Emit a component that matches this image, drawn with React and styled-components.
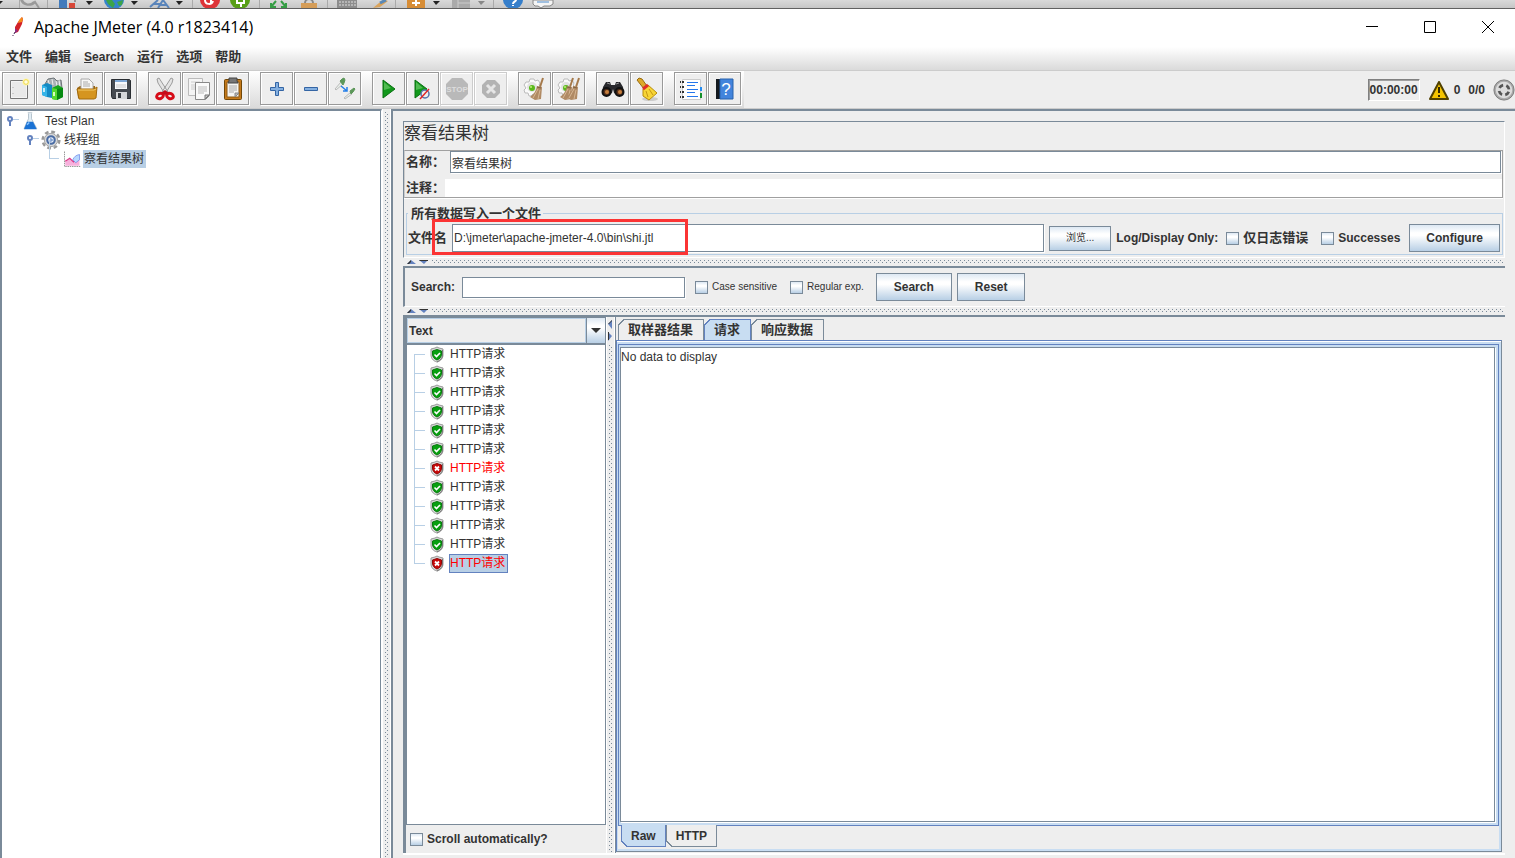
import { useState } from 'react'
import styled, { createGlobalStyle } from 'styled-components'

const slate = '#7a8a99'
const blue = '#6382bf'
const paleBlue = '#b8cfe5'
const tabBlue = '#c8ddf2'
const grey = '#eeeeee'
const metal = 'linear-gradient(#dde8f3 0%, #ffffff 30%, #ffffff 40%, #b8cfe5 100%)'

const dots = `url("data:image/svg+xml,%3Csvg xmlns='http://www.w3.org/2000/svg' width='4' height='4' shape-rendering='crispEdges'%3E%3Crect width='1' height='1' fill='%237a8a99'/%3E%3Crect x='2' y='2' width='1' height='1' fill='%237a8a99'/%3E%3C/svg%3E")`

const GlobalStyle = createGlobalStyle`
  * {
    box-sizing: border-box;
  }
  body {
    margin: 0;
    background: ${grey};
    color: #333;
    font-family: 'Liberation Sans', 'Noto Sans CJK SC', sans-serif;
    font-size: 12px;
    line-height: 18px;
  }
  button, input, select, textarea {
    font: inherit;
    color: inherit;
    margin: 0;
    border-radius: 0;
    outline: none;
  }
  svg {
    display: block;
    flex: none;
  }
`

const Window = styled.div`
  min-height: 100vh;
  display: flex;
  flex-direction: column;
`

const Behind = styled.div`
  height: 9px;
  overflow: hidden;
  background: linear-gradient(#d9d9d9, #c6c6c6);
  border-bottom: 1px solid #606060;
`

const TitleBar = styled.header`
  height: 38px;
  background: white;
  display: flex;
  align-items: center;
  padding: 0 0 2px 8px;
`

const Title = styled.h1`
  flex: 1;
  margin: 0 0 0 6px;
  color: black;
  font: 400 16px/22px 'Open Sans', sans-serif;
`

const WindowButtons = styled.div`
  display: flex;
  gap: 4px;
`

const WindowButton = styled.button`
  width: 54px;
  height: 36px;
  padding: 0;
  border: 0;
  background: none;
  display: flex;
  align-items: center;
  justify-content: center;
`

const MenuBar = styled.nav`
  height: 24px;
  display: flex;
  gap: 13px;
  padding: 0 6px 4px;
  align-items: center;
  background: linear-gradient(#ffffff, #dadada);
  border-bottom: 1px solid #ccc;
`

const MenuItem = styled.button`
  padding: 0;
  border: 0;
  background: none;
  font-weight: bold;
  font-size: ${p => p.$latin ? 12 : 13}px;
  line-height: 20px;

  &::first-letter {
    text-decoration: ${p => p.$latin ? 'underline' : 'none'};
  }
`

const ToolBar = styled.div`
  height: 38px;
  display: flex;
  justify-content: space-between;
  border-bottom: 1px solid #ccc;
`

const Tools = styled.div`
  display: flex;
  gap: 10px;
  padding: 1px 2px 3px;
  background: linear-gradient(#ffffff, #dadada);
`

const ToolGroup = styled.div`
  display: flex;
  gap: 1px;
  padding-right: 1px;
`

const ToolButton = styled.button`
  width: 33px;
  height: 33px;
  padding: 0;
  border: 1px solid ${p => p.disabled ? '#ccc' : '#999'};
  box-shadow: inset 1px 1px white, 1px 1px white;
  background: ${grey};
  display: flex;
  align-items: center;
  justify-content: center;

  &:active {
    background: #ccc;
  }
`

const Status = styled.div`
  display: flex;
  align-items: center;
  font-weight: bold;
  gap: 8px;
  padding-top: 1px;
`

const Timer = styled.output`
  padding: 1px;
  border: 1px solid #808080;
  border-right-color: white;
  border-bottom-color: white;
  box-shadow: inset 1px 1px #a0a0a0;
`

const Warnings = styled.span`
  display: flex;
  align-items: center;
  gap: 4px;
`

const Body = styled.main`
  flex: 1;
  display: flex;
`

const PlanPane = styled.aside`
  width: 382px;
  border: 2px solid ${slate};
  border-right: 1px solid white;
  border-bottom: 0;
  background: white;
  display: flex;

  &::after {
    content: '';
    width: 1px;
    margin-left: auto;
    background: ${slate};
  }
`

const PlanTree = styled.ul`
  list-style: none;
  margin: 0;
  padding: 0 0 0 3px;

  ul {
    list-style: none;
    margin: 0;
    padding: 0 0 0 20px;
  }
`

const PlanRow = styled.div`
  display: flex;
  align-items: center;
  height: 19px;
`

const Elbow = styled.span`
  width: 10px;
  height: 19px;
  margin: -19px 4px 0 4px;
  border-left: 1px solid ${paleBlue};
  border-bottom: 1px solid ${paleBlue};
`

const NodeLabel = styled.span`
  margin-left: ${p => p.$gap}px;
  padding: 0 2px 0 1px;
  background: ${p => p.$selected ? paleBlue : 'none'};
`

const VerticalDivider = styled.div`
  width: 9px;
  padding-top: 3px;
  display: flex;
  flex-direction: column;
  align-items: center;
  gap: 4px;
  border-left: 1px solid white;
  border-right: 1px solid white;

  &::after {
    content: '';
    flex: 1;
    width: 4px;
    background: ${dots};
  }
`

const HorizontalDivider = styled.div`
  height: 8px;
  display: flex;
  align-items: center;
  gap: 4px;
  padding: 0 2px 0 4px;

  &::after {
    content: '';
    flex: 1;
    height: 4px;
    background: ${dots};
  }
`

const WorkPane = styled.div`
  flex: 1;
  min-width: 0;
  border: 2px solid ${slate};
  border-right: 0;
  border-bottom: 0;
  padding: 10px 10px 3px;
  display: flex;
  flex-direction: column;
`

const Panel = styled.section`
  border: 1px solid ${slate};
  border-right-color: white;
  border-bottom-color: white;
  padding-right: 1px;
`

const Heading = styled.h2`
  margin: 0;
  font-size: 17px;
  font-weight: 400;
  line-height: 24px;
  padding-bottom: 4px;
`

const NameBox = styled.div`
  border: 1px solid #a0a0a0;
  border-left-color: #ccc;
  box-shadow: 0 1px white;
  padding-left: 1px;
`

const FieldRow = styled.div`
  display: flex;
  align-items: center;
  gap: ${p => p.$gap}px;
  padding: 0 ${p => p.$right || 0}px ${p => p.$bottom || 0}px 0;
`

const Label = styled.label`
  font-weight: bold;
  font-size: ${p => p.$latin ? 12 : 13}px;
  white-space: nowrap;
`

const TextField = styled.input`
  flex: 1;
  min-width: 0;
  height: ${p => p.$height}px;
  padding: 0 1px;
  border: ${p => p.$flat ? '0' : `1px solid ${slate}`};
  background: white;
  box-shadow: ${p => p.$flat ? 'none' : '1px 1px white'};
`

const FileBox = styled.fieldset`
  position: relative;
  min-width: 0;
  margin: 6px 0 2px 2px;
  padding: 1px 2px 2px 1px;
  border: 1px solid ${paleBlue};
`

const Legend = styled.legend`
  padding: 0 2px 0 3px;
  font-weight: bold;
  font-size: 13px;
  line-height: 19px;
`

const Highlight = styled.span`
  position: absolute;
  left: 25px;
  top: -4px;
  width: 256px;
  height: 36px;
  border: 3px solid #fb3434;
  pointer-events: none;
`

const MetalButton = styled.button`
  height: ${p => p.$small ? 25 : 28}px;
  padding: 0 ${p => p.$pad || 16}px;
  border: 1px solid ${slate};
  background: ${metal};
  font-weight: ${p => p.$small ? 400 : 700};
  font-size: ${p => p.$small ? 10 : 12}px;
  white-space: nowrap;
`

const CheckGroup = styled.div`
  display: flex;
  gap: 13px;
  margin: ${p => p.$margin};
`

const CheckLabel = styled.label`
  display: flex;
  align-items: center;
  gap: 4px;
  font-weight: ${p => p.$small ? 400 : 700};
  font-size: ${p => p.$small ? 10 : p.$latin ? 12 : 13}px;
  white-space: nowrap;
`

const CheckBox = styled.input.attrs({ type: 'checkbox' })`
  appearance: none;
  width: 13px;
  height: 13px;
  border: 1px solid ${slate};
  background: ${metal};

  &:checked {
    box-shadow: inset 0 0 0 3px white;
    background: #333;
  }
`

const SearchPanel = styled.form`
  display: flex;
  align-items: center;
  height: 41px;
  border-top: 2px solid ${slate};
  border-left: 2px solid ${slate};
  border-bottom: 1px solid white;
  padding-left: 6px;
`

const SearchField = styled(TextField)`
  flex: none;
  width: 223px;
  margin: 0 10px 0 7px;
`

const SearchButtons = styled.div`
  display: flex;
  gap: 5px;
`

const Results = styled.section`
  flex: 1;
  display: flex;
  border-top: 2px solid ${slate};
  border-bottom: 2px solid white;
  padding-right: 3px;
`

const ResultList = styled.div`
  width: 203px;
  display: flex;
  flex-direction: column;
  border-left: 3px solid ${slate};
`

const Combo = styled.div`
  display: flex;
  height: 28px;
  border: 1px solid ${slate};
  border-bottom-width: 2px;
`

const ComboSelect = styled.select`
  flex: 1;
  appearance: none;
  border: 1px solid ${paleBlue};
  background: ${grey};
  padding: 0 1px;
  font-weight: bold;
`

const ComboArrow = styled.span`
  width: 19px;
  display: flex;
  align-items: center;
  justify-content: center;
  border-left: 1px solid ${slate};
  background: ${metal};
`

const Samples = styled.ul`
  flex: 1;
  list-style: none;
  margin: 0;
  padding: 0 0 0 7px;
  background: white;
  border: 1px solid ${slate};
  border-top: 0;
`

const Sample = styled.li`
  display: flex;
  align-items: center;
  height: 19px;
  color: ${p => p.$failed ? 'red' : '#333'};

  &::before {
    content: '';
    width: 10px;
    height: 19px;
    margin: ${p => p.$first ? '19px 4px 0 0' : '-19px 4px 0 0'};
    border-left: 1px solid ${paleBlue};
    border-bottom: ${p => p.$first ? 0 : 1}px solid ${paleBlue};
    border-top: ${p => p.$first ? 1 : 0}px solid ${paleBlue};
  }
`

const SampleLabel = styled.span`
  margin-left: 4px;
  padding: 0 2px 0 0;
  line-height: 17px;
  border: 1px solid ${p => p.$selected ? blue : 'transparent'};
  background: ${p => p.$selected ? paleBlue : 'none'};
`

const ScrollRow = styled.div`
  height: 28px;
  display: flex;
  align-items: center;
  padding-left: 4px;
`

const TabPane = styled.div`
  flex: 1;
  min-width: 0;
  display: flex;
  flex-direction: column;
  padding: 2px 0 1px;
  border-left: 1px solid ${slate};
`

const Tabs = styled.div`
  display: flex;
  padding-left: ${p => p.$left}px;
  margin: ${p => p.$bottom ? '-1px 0 2px' : '0'};
`

// the cut corner sits top left, or bottom left for tabs hanging under the pane
const Tab = styled.button`
  height: ${p => p.$bottom ? 22 : 21}px;
  padding: 0 ${p => p.$bottom ? 10 : 11}px 0 10px;
  border: 0;
  font-weight: bold;
  font-size: ${p => p.$latin ? 12 : 13}px;
  --line: ${p => p.$active ? blue : slate};
  --side: ${p => p.$bottom ? '100%' : '0'};
  background:
    linear-gradient(${p => p.$bottom ? '45deg' : '135deg'}, ${grey} 4px, var(--line) 4px, var(--line) 5px, transparent 5px) 0 var(--side) / 7px 7px no-repeat,
    linear-gradient(var(--line), var(--line)) 0 var(--side) / 100% 1px no-repeat,
    linear-gradient(var(--line), var(--line)) 0 0 / 1px 100% no-repeat,
    linear-gradient(var(--line), var(--line)) 100% 0 / 1px 100% no-repeat,
    ${p => p.$active ? tabBlue : grey};
`

const TabContent = styled.div`
  flex: 1;
  display: flex;
  flex-direction: column;
  border: 1px solid ${blue};
  border-right-color: ${slate};
  border-bottom-color: ${slate};
  box-shadow: inset 0 1px white;
  background: ${tabBlue};
  padding: 3px 2px 2px 1px;
`

const InnerPane = styled.div`
  flex: 1;
  display: flex;
  flex-direction: column;
  background: ${grey};
`

const InnerContent = styled.div`
  flex: 1;
  display: flex;
  border: 1px solid ${blue};
  background: ${tabBlue};
  padding: 2px 3px 3px 1px;
`

const Output = styled.textarea`
  flex: 1;
  resize: none;
  border: 1px solid ${slate};
  box-shadow: 1px 1px white;
  padding: 0;
  background: white;
  line-height: 18px;
`

const Icon = ({ size = 24, children, ...rest }) => (
  <svg width={size} height={size} viewBox="0 0 24 24" fill="none" aria-hidden="true" {...rest}>{children}</svg>
)

const NewIcon = () => <Icon>
  <path d="M3.5 3.5h17v18h-17z" fill="#f4f4f4" stroke="#777" />
  <path d="M5 5h14v15H5z" fill="#e9e9e9" />
  <path d="M6 10v1m0 5v1" stroke="#aaa" />
  <circle cx="19" cy="5" r="3.6" fill="#fff6a8" />
  <circle cx="19" cy="5" r="2.3" fill="#fffde0" stroke="#efd84d" />
</Icon>

const TemplatesIcon = () => <Icon>
  <path d="M4 7l3-5 6-1 3 3 4-1 1 8-8 5z" fill="#a9b0b4" stroke="#6d7477" />
  <path d="M7 3l2 6m2-7l1 6m3-4l1 5m2-6l1 7" stroke="#eee" />
  <path d="M1 8l5-2 5 2v13l-5-1-5-2z" fill="#138ac4" />
  <path d="M1 8l5 2v10l-5-2z" fill="#35b4e8" />
  <path d="M3 11v4" stroke="#c8edfa" strokeWidth="2" />
  <path d="M11 11l6-3 5 3v9l-6 3-5-1z" fill="#16a51a" />
  <path d="M11 11l5 1v11l-5-1z" fill="#55d92e" />
  <path d="M16 12l6-1v9l-6 3z" fill="#078a12" />
  <path d="M13 15v4" stroke="#d8ffc0" strokeWidth="2" />
</Icon>

const OpenIcon = () => <Icon>
  <path d="M2 11l3-2h15l1 12H3z" fill="#9b6714" />
  <path d="M6 11V2h8l4 4v7H6z" fill="#f7f7f7" stroke="#aaa" />
  <path d="M8 5h5M8 7h7M8 9h7" stroke="#aaa" />
  <path d="M2 12h17l3-2-1 11-2 1H4z" fill="#d59520" stroke="#a36b0d" />
  <path d="M3 13h16l2-1" stroke="#f3cb68" />
</Icon>

const SaveIcon = () => <Icon>
  <path d="M2.5 2.5h18l1 1v18h-18l-1-2z" fill="#454a50" stroke="#292d32" />
  <path d="M6 3h12v9H6z" fill="#f7f9fb" />
  <path d="M6 3h12v2H6z" fill="#7fa8d5" />
  <path d="M7 8h10M7 10h10" stroke="#c8c8c8" />
  <path d="M7 15h11v7H7z" fill="#d5d7d9" />
  <path d="M9 16h3v5H9z" fill="#353a40" />
</Icon>

const CutIcon = () => <Icon>
  <path d="M4 2l2-1 9 14-3 2L5 6zM20 2l-2-1-9 14 3 2 7-11z" fill="#e4e4e4" stroke="#888" strokeWidth=".8" />
  <ellipse cx="7" cy="19" rx="3.500" ry="2.500" transform="rotate(-25 7 19)" stroke="#d60c18" strokeWidth="3" />
  <ellipse cx="17" cy="19" rx="3.500" ry="2.500" transform="rotate(25 17 19)" stroke="#d60c18" strokeWidth="3" />
  <path d="M8 16l4-3 4 3-4 2z" fill="#c50b18" />
</Icon>

const CopyIcon = () => <Icon>
  <path d="M1.500 1.500h14v17h-14z" fill="#f5f5f5" stroke="#bbb" />
  <path d="M4 5h9M4 8h9M4 10h4M4 12h4" stroke="#ccc" />
  <path d="M8.500 5.500h14v13l-4 4h-10z" fill="#fafafa" stroke="#888" />
  <path d="M11 10h9M11 12h9M11 14h9M11 16h6" stroke="#bbb" />
  <path d="M18 22v-4h4z" fill="#ccc" stroke="#777" />
</Icon>

const PasteIcon = () => <Icon>
  <rect x="3.500" y="2.500" width="17" height="20" rx="1" fill="#c4791a" stroke="#714708" />
  <path d="M6 5h12v15H6z" fill="#f5f5f3" stroke="#8e5a14" />
  <path d="M8 4V1h8v3l1 2H7z" fill="#777" stroke="#444" />
  <path d="M8 9h8M8 11h8M8 13h8M8 15h5" stroke="#aaa" />
  <path d="M14 20v-4h4z" fill="#bbb" stroke="#888" />
</Icon>

const PlusIcon = () => <Icon>
  <path d="M10.500 5.500h3v5h5v3h-5v5h-3v-5h-5v-3h5z" fill="#83afe0" stroke="#3465a4" />
</Icon>

const MinusIcon = () => <Icon>
  <path d="M5.500 10.500h13v3h-13z" fill="#83afe0" stroke="#3465a4" />
</Icon>

const ToggleIcon = () => <Icon>
  <path d="M2 12l6-7 2 2-7 6zM11 21l7-6 1 2-7 5z" fill="#e8eee9" stroke="#bbb" />
  <path d="M7 4l2-2 2-1 1 2-1 3-1 2zM17 14l4-3 1 1-2 3-2 2z" fill="#5c9759" stroke="#5c9759" />
  <path d="M8 9l6 5m0-4v4h-4" stroke="#247fe9" strokeWidth="1.500" />
</Icon>

const StartIcon = () => <Icon>
  <path d="M6 3l12 9-12 9z" fill="#12981b" stroke="#087111" />
  <path d="M7 5l7 6-7 2z" fill="#50bb51" />
</Icon>

const StartNoPauseIcon = () => <Icon>
  <path d="M4 3l12 9-12 9z" fill="#12981b" stroke="#087111" />
  <path d="M5 5l7 6-7 2z" fill="#50bb51" />
  <circle cx="14" cy="17" r="4" fill="#eee" stroke="#5472ab" strokeWidth="1.500" />
  <path d="M9 22l9-10" stroke="#e12727" strokeWidth="1.500" />
</Icon>

const StopIcon = () => <Icon>
  <path d="M7 1h10l6 6v10l-6 6H7l-6-6V7z" fill="#b9b9b9" />
  <text x="12" y="15" textAnchor="middle" fontSize="8" fontWeight="bold" fill="#ddd">STOP</text>
</Icon>

const ShutdownIcon = () => <Icon>
  <path d="M8 3h8l5 5v8l-5 5H8l-5-5V8z" fill="#b3b3b3" />
  <path d="M8 8l8 8m0-8l-8 8" stroke="#e6e6e6" strokeWidth="3" />
</Icon>

const Broom = ({ x = 0 }) => <g transform={`translate(${x})`}>
  <path d="M20 1l-3 9" stroke="#a5794a" strokeWidth="2" />
  <path d="M14 9l5 1-1 12-6 1-5-3c4-3 6-6 7-11z" fill="#b08a64" />
  <path d="M15 12l-5 9m7-8l-2 9" stroke="#d7b794" />
  <path d="M14 10l4 1" stroke="#80603e" />
</g>

const Gear = () => <>
  <path d="M7 2h4l1 2 3-1 2 3-1 2 2 2v3l-3 1v3l-3 1-2-1-2 2H6l-1-3-3 0-1-3 2-2-2-3 2-3 3 0z" fill="#fafafa" stroke="#bbb" />
  <circle cx="9" cy="10" r="5" fill="#e2e2e2" />
  <circle cx="9" cy="11" r="3" fill="#59b91b" />
  <circle cx="8" cy="10" r="1" fill="#c3ef7d" />
</>

const ClearIcon = () => <Icon><Gear /><Broom /></Icon>
const ClearAllIcon = () => <Icon><Gear /><Broom x={-4} /><Broom x={2} /></Icon>

const FindIcon = () => <Icon>
  <path d="M2 10l3-5 4 0 1 3h4l1-3h4l3 5 1 7-4 2-6-3-1-4-1 4-6 3-4-2z" fill="#29292d" />
  <path d="M6 6l3 1m6 0l3-1" stroke="#999" />
  <circle cx="5.500" cy="15" r="4" fill="#57301b" stroke="#111" strokeWidth="2" />
  <circle cx="18.500" cy="15" r="4" fill="#57301b" stroke="#111" strokeWidth="2" />
  <circle cx="6" cy="15" r="2" fill="#c8803e" />
  <circle cx="19" cy="15" r="2" fill="#c8803e" />
</Icon>

const ResetSearchIcon = () => <Icon>
  <ellipse cx="15" cy="22" rx="8" ry="2" fill="#ccc" />
  <path d="M2 3l2-2 3 1 5 7-3 3z" fill="#dda92a" stroke="#986c10" />
  <path d="M8 12l5-4 9 8-8 7-6-4z" fill="#f7d536" stroke="#b88d0c" />
  <path d="M8 12l5-4" stroke="#df2d29" strokeWidth="3" />
  <path d="M11 14l2 6m1-8l4 6" stroke="#c69615" />
</Icon>

const LogIcon = () => <Icon>
  <path d="M3.500 2.500h18v20h-18z" fill="white" stroke="#ccc" />
  <path d="M1 5h4M1 10h4M1 15h4M1 20h4" stroke="#333" strokeWidth="2" strokeDasharray="1 1 2" />
  <path d="M8 5.500h11M8 8.500h8M8 12.500h11M8 15.500h8M8 19.500h11" stroke="#2476eb" />
  <path d="M22 10v4" stroke="#248cf0" strokeWidth="2" />
  <path d="M22 16v5" stroke="#14902a" strokeWidth="2" />
</Icon>

const HelpIcon = () => <Icon>
  <path d="M3 2h4v20H3z" fill="#151a20" />
  <path d="M7 2h13v20H7z" fill="#4284dc" stroke="#2862ac" />
  <text x="13" y="18" textAnchor="middle" fontSize="17" fill="white">?</text>
</Icon>

const tools = [
  [['New', NewIcon], ['Templates', TemplatesIcon], ['Open', OpenIcon], ['Save', SaveIcon]],
  [['Cut', CutIcon], ['Copy', CopyIcon], ['Paste', PasteIcon]],
  [['Expand all', PlusIcon], ['Collapse all', MinusIcon], ['Toggle', ToggleIcon]],
  [['Start', StartIcon], ['Start no pauses', StartNoPauseIcon], ['Stop', StopIcon, true], ['Shutdown', ShutdownIcon, true]],
  [['Clear', ClearIcon], ['Clear all', ClearAllIcon]],
  [['Find', FindIcon], ['Reset find', ResetSearchIcon]],
  [['Function helper', LogIcon], ['Help', HelpIcon]],
]

const BehindIcons = () => (
  <svg width="560" height="8" viewBox="0 0 560 8" fill="none" aria-hidden="true">
    <path d="M19.500 0v8M47.500 0v8M192.500 0v8M259.500 0v8M327.500 0v8M395.500 0v8M493.500 0v8" stroke="#aaa" />
    <path d="M0 1h3l-3 3zM86 1h7l-4 4zM131 1h7l-4 4zM176 1h7l-4 4zM433 1h7l-4 4z" fill="#222" />
    <path d="M478 1h7l-4 4z" fill="#888" />
    <path d="M21 0a8 7 0 0 0 14 2l4 6M22 0c2 5 8 6 12 2" stroke="#999" strokeWidth="2" />
    <path d="M59 0h8v8h-8z" fill="#427bbc" /><path d="M69 3h6v5h-6z" fill="#d84738" /><path d="M75 0v2" stroke="#555" />
    <path d="M104 0h20a10 9 0 0 1-20 0z" fill="#3584cc" /><path d="M106 0l6 0 3 4-2 4-5-4zM117 2l6-2-1 5-3 1z" fill="#3ca449" />
    <path d="M150 7l8-7m-4 4h6M158 8l5-8 6 8m-8-3h6" stroke="#5a85bb" strokeWidth="2" />
    <path d="M200 0h20a10 9 0 0 1-20 0z" fill="#dd3438" /><path d="M205 0c0 5 7 5 8 1m-2-2v4" stroke="#fff" strokeWidth="2" />
    <path d="M230 0h20a10 9 0 0 1-20 0z" fill="#579e16" /><path d="M237 0v3h4v4m3-7v3h-4" stroke="#fff" strokeWidth="2" />
    <path d="M276 1l-5 6m0-4v4h5M281 1l5 6m0-4v4h-5" stroke="#369d45" strokeWidth="2" />
    <path d="M305 3a4 4 0 0 1 8 0" stroke="#888" strokeWidth="2" /><path d="M301 3h16v5h-16z" fill="#d59d58" />
    <path d="M337 0h20v8h-20z" fill="#8d8d8d" /><path d="M339 2h17M339 5h17" stroke="#ddd" strokeDasharray="2 1" />
    <path d="M373 8l6-5 6-3 3 1-8 6z" fill="#d9a35c" /><path d="M380 3l6-3" stroke="#5888b7" strokeWidth="3" />
    <path d="M407 0h18v8h-18z" fill="#d78d36" /><path d="M416 0v6m-4-3h8" stroke="white" strokeWidth="2" />
    <path d="M452 0h18v8h-18z" fill="#aaa" /><path d="M458 0v8m0-5h12" stroke="#ccc" />
    <path d="M503 0h20a10 9 0 0 1-20 0z" fill="#367fcb" /><path d="M516 0c0 2-3 1-3 4m0 1v1" stroke="white" strokeWidth="2" />
    <path d="M533 0v4l2 2h3l3 2 3-2h6l3-2V0z" fill="#f5f5f5" stroke="#888" /><path d="M537 2h12" stroke="#4d8bcc" />
  </svg>
)

const Feather = () => (
  <svg width="20" height="20" viewBox="0 0 20 20" aria-hidden="true">
    <path d="M14 0l1 2-1 5-4 8-3 1v-6l3-5z" fill="#d22128" />
    <path d="M14 0l1 2-1 3-4 1 1-3z" fill="#f58a1c" />
    <path d="M7 11l3 3-3 2z" fill="#8c2c83" />
    <path d="M7 15l-1 2M5 18v1" stroke="#402050" />
  </svg>
)

const Key = () => (
  <svg width="16" height="14" viewBox="0 0 16 14" fill="none" aria-hidden="true">
    <circle cx="5" cy="5" r="2" fill="white" stroke={blue} strokeWidth="2" />
    <path d="M5 7v5" stroke={blue} strokeWidth="2" />
    <path d="M8 5.500h6" stroke={paleBlue} />
  </svg>
)

const Flask = () => <Icon size={18}>
  <path d="M9 1h6M10 2v7L4 22h17L14 9V2" fill="#e1edf5" stroke="#a3b3bf" />
  <path d="M8 13h8l5 10H4z" fill="#1a72d4" />
  <path d="M8 17l3-3" stroke="#8bc5ff" strokeWidth="2" />
</Icon>

const Cog = () => <Icon size={20}>
  <circle cx="12" cy="12" r="10" stroke="#999" strokeWidth="3" strokeDasharray="4.500 3.354" />
  <circle cx="12" cy="12" r="8" fill="#d8d8d8" stroke="#999" />
  <circle cx="12" cy="12" r="4.500" fill="#e8eef8" stroke="#4a6ca4" strokeWidth="2.500" />
  <path d="M11 9l4 3-4 3z" fill="#7f9fcf" />
</Icon>

const Chart = () => <Icon size={18}>
  <path d="M2 2v20h21" stroke="#777" strokeDasharray="2 1" />
  <path d="M3 21v-6l6-4 5 4 8-3v9z" fill="#f7b0dc" />
  <path d="M3 15l6-4 5 5 7-7" stroke="#d93986" strokeWidth="1.500" />
  <path d="M13 13c2-4 4-6 9-7v7l-5 4z" fill="#b8d8ff" stroke="#7089e7" />
</Icon>

const Shield = ({ failed }) => (
  <svg width="16" height="17" viewBox="0 0 16 17" fill="none" aria-hidden="true">
    <path d="M8 1l2 1 4 1v6c0 3-2 6-6 7-4-1-6-4-6-7V3l4-1z" fill="#d8d8d8" stroke="#999" />
    <path d="M13.500 4v5c0 3-2 5-5.500 7" stroke="#777" />
    <path d="M8 3.500l4.500 1.500v3c0 3-2 5-4.500 6-2.500-1-4.500-3-4.500-6V5z" fill={failed ? '#c80808' : '#08a010'} stroke={failed ? '#8e0505' : '#087a0d'} />
    {failed
      ? <path d="M6 6.500l4 4m0-4l-4 4" stroke="white" strokeWidth="1.800" />
      : <path d="M5.500 8.500l2 2 3.500-3.500" stroke="white" strokeWidth="1.600" />}
  </svg>
)

const Warning = () => (
  <svg width="22" height="19" viewBox="0 0 22 19" fill="none" aria-hidden="true">
    <path d="M11 1l9 17H2z" fill="#f5c400" stroke="#514100" strokeWidth="2" strokeLinejoin="round" />
    <path d="M11 6v6m0 2v2" stroke="#332900" strokeWidth="2" />
  </svg>
)

const Remote = () => <Icon size={22}>
  <circle cx="12" cy="12" r="11" fill="#aaa" stroke="#777" />
  <circle cx="12" cy="12" r="9" fill="#ddd" />
  <circle cx="12" cy="12" r="5.500" stroke="#555" strokeWidth="3" strokeDasharray="5 3.640" strokeDashoffset="-2" />
</Icon>

const UpDown = () => (
  <svg width="21" height="5" viewBox="0 0 21 5" aria-hidden="true">
    <path d="M0 4l4-4 5 4z" fill={blue} /><path d="M0 4l4-4v2l-2 2z" fill="#333" />
    <path d="M12 0h9l-4 4z" fill={blue} /><path d="M12 0h9v1h-8z" fill="#333" />
  </svg>
)

const LeftRight = () => (
  <svg width="5" height="21" viewBox="0 0 5 21" aria-hidden="true">
    <path d="M4 0v9L0 4z" fill={blue} /><path d="M4 0L0 4h1l3-3z" fill="#333" />
    <path d="M0 12v9l4-5z" fill={blue} /><path d="M0 12h1v8H0z" fill="#333" />
  </svg>
)

const samples = [true, true, true, true, true, true, false, true, true, true, true, false]

export default function App() {
  const [tab, setTab] = useState('请求')
  const [view, setView] = useState('Raw')
  const [selected, setSelected] = useState(11)

  return <>
    <GlobalStyle />
    <Window>
      <Behind><BehindIcons /></Behind>
      <TitleBar>
        <Feather />
        <Title>Apache JMeter (4.0 r1823414)</Title>
        <WindowButtons>
          <WindowButton aria-label="Minimize">
            <svg width="12" height="12" stroke="black"><path d="M0 5.500h12" /></svg>
          </WindowButton>
          <WindowButton aria-label="Maximize">
            <svg width="12" height="12" stroke="black" fill="none"><path d="M.5.5h11v11H.5z" /></svg>
          </WindowButton>
          <WindowButton aria-label="Close">
            <svg width="12" height="12" stroke="black"><path d="M0 0l12 12M12 0L0 12" /></svg>
          </WindowButton>
        </WindowButtons>
      </TitleBar>
      <MenuBar>
        <MenuItem>文件</MenuItem>
        <MenuItem>编辑</MenuItem>
        <MenuItem $latin>Search</MenuItem>
        <MenuItem>运行</MenuItem>
        <MenuItem>选项</MenuItem>
        <MenuItem>帮助</MenuItem>
      </MenuBar>
      <ToolBar>
        <Tools>
          {tools.map((group, i) => (
            <ToolGroup key={i}>
              {group.map(([name, Glyph, disabled]) => (
                <ToolButton key={name} aria-label={name} disabled={disabled}><Glyph /></ToolButton>
              ))}
            </ToolGroup>
          ))}
        </Tools>
        <Status>
          <Timer>00:00:00</Timer>
          <Warnings><Warning />0</Warnings>
          <span>0/0</span>
          <Remote />
        </Status>
      </ToolBar>

      <Body>
        <PlanPane>
          <PlanTree>
            <li>
              <PlanRow><Key /><Flask /><NodeLabel $gap={5}>Test Plan</NodeLabel></PlanRow>
              <ul>
                <li>
                  <PlanRow><Key /><Cog /><NodeLabel $gap={2}>线程组</NodeLabel></PlanRow>
                  <ul>
                    <li>
                      <PlanRow><Elbow /><Chart /><NodeLabel $gap={2} $selected>察看结果树</NodeLabel></PlanRow>
                    </li>
                  </ul>
                </li>
              </ul>
            </li>
          </PlanTree>
        </PlanPane>
        <VerticalDivider />
        <WorkPane>
          <Panel>
            <Heading>察看结果树</Heading>
            <NameBox>
              <FieldRow $gap={5} $right={1} $bottom={6}>
                <Label htmlFor="name">名称：</Label>
                <TextField id="name" $height={22} defaultValue="察看结果树" />
              </FieldRow>
              <FieldRow $gap={0}>
                <Label htmlFor="comment">注释：</Label>
                <TextField id="comment" $height={18} $flat />
              </FieldRow>
            </NameBox>
            <FileBox>
              <Legend>所有数据写入一个文件</Legend>
              <FieldRow $gap={5}>
                <Label htmlFor="file">文件名</Label>
                <TextField id="file" $height={28} defaultValue="D:\jmeter\apache-jmeter-4.0\bin\shi.jtl" />
                <MetalButton $small>浏览...</MetalButton>
                <Label as="span" $latin>Log/Display Only:</Label>
                <CheckGroup $margin="0 4px 0 3px">
                  <CheckLabel><CheckBox />仅日志错误</CheckLabel>
                  <CheckLabel $latin><CheckBox />Successes</CheckLabel>
                </CheckGroup>
                <MetalButton>Configure</MetalButton>
              </FieldRow>
              <Highlight />
            </FileBox>
          </Panel>
          <HorizontalDivider><UpDown /></HorizontalDivider>
          <SearchPanel onSubmit={e => e.preventDefault()}>
            <Label htmlFor="search" $latin>Search:</Label>
            <SearchField id="search" $height={21} />
            <CheckGroup $margin="0 12px 0 0">
              <CheckLabel $small><CheckBox />Case sensitive</CheckLabel>
              <CheckLabel $small><CheckBox />Regular exp.</CheckLabel>
            </CheckGroup>
            <SearchButtons>
              <MetalButton $pad={17}>Search</MetalButton>
              <MetalButton $pad={17} type="reset">Reset</MetalButton>
            </SearchButtons>
          </SearchPanel>
          <HorizontalDivider><UpDown /></HorizontalDivider>
          <Results>
            <ResultList>
              <Combo>
                <ComboSelect aria-label="Renderer"><option>Text</option></ComboSelect>
                <ComboArrow>
                  <svg width="10" height="5" aria-hidden="true"><path d="M0 0h10L5 5z" fill="#333" /></svg>
                </ComboArrow>
              </Combo>
              <Samples>
                {samples.map((ok, i) => (
                  <Sample key={i} $first={i === 0} $failed={!ok} onClick={() => setSelected(i)}>
                    <Shield failed={!ok} />
                    <SampleLabel $selected={selected === i}>HTTP请求</SampleLabel>
                  </Sample>
                ))}
              </Samples>
              <ScrollRow>
                <CheckLabel $latin><CheckBox />Scroll automatically?</CheckLabel>
              </ScrollRow>
            </ResultList>
            <VerticalDivider><LeftRight /></VerticalDivider>
            <TabPane>
              <Tabs $left={2}>
                {['取样器结果', '请求', '响应数据'].map(t => (
                  <Tab key={t} $active={tab === t} onClick={() => setTab(t)}>{t}</Tab>
                ))}
              </Tabs>
              <TabContent>
                <InnerPane>
                  <InnerContent>
                    <Output readOnly aria-label="Request" value="No data to display" />
                  </InnerContent>
                  <Tabs $left={3} $bottom>
                    {['Raw', 'HTTP'].map(t => (
                      <Tab key={t} $bottom $latin $active={view === t} onClick={() => setView(t)}>{t}</Tab>
                    ))}
                  </Tabs>
                </InnerPane>
              </TabContent>
            </TabPane>
          </Results>
        </WorkPane>
      </Body>
    </Window>
  </>
}
